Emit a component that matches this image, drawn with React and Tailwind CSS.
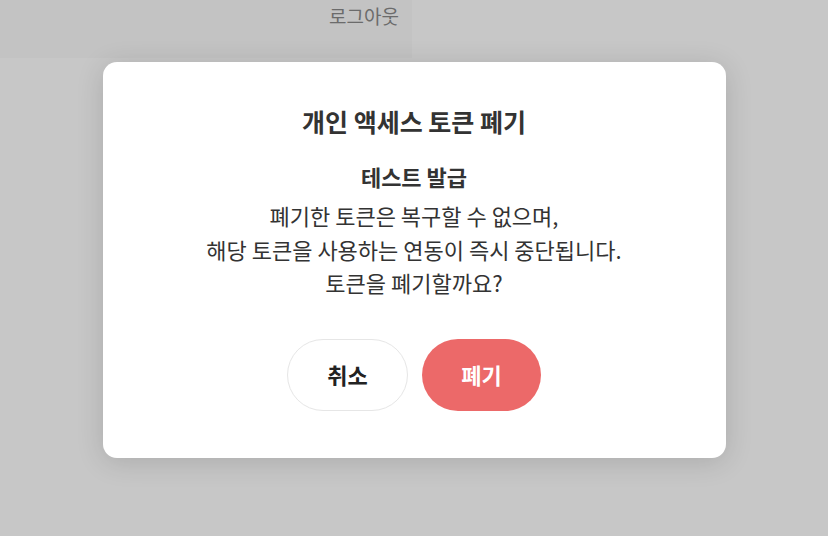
import React from "react";

const font = { fontFamily: '"Noto Sans CJK KR", "Noto Sans", sans-serif' };

function RevokeTokenModal({ tokenName, onCancel, onConfirm }) {
  return (
    <div className="w-[623px] rounded-[14px] bg-white px-8 pt-[43px] pb-[47px] shadow-[0_4px_28px_rgba(0,0,0,0.14)] flex flex-col items-center">
      <h2 className="text-[25px] leading-[32px] font-bold text-[#333]">개인 액세스 토큰 폐기</h2>
      <h3 className="mt-[24px] text-[22px] leading-[30px] font-bold text-[#333]">{tokenName}</h3>
      <p className="mt-[8px] text-center text-[22px] leading-[33.5px] text-[#333]">
        폐기한 토큰은 복구할 수 없으며,
        <br />
        해당 토큰을 사용하는 연동이 즉시 중단됩니다.
        <br />
        토큰을 폐기할까요?
      </p>
      <div className="mt-[39px] flex gap-[14px]">
        <button
          onClick={onCancel}
          className="w-[121px] h-[72px] rounded-full border border-[#e6e6e6] bg-white text-[22px] font-bold text-[#222]"
        >
          취소
        </button>
        <button
          onClick={onConfirm}
          className="w-[119px] h-[72px] rounded-full bg-[#ec6969] text-[22px] font-bold text-white"
        >
          폐기
        </button>
      </div>
    </div>
  );
}

export default function App() {
  return (
    <div className="relative w-[828px] h-[536px] overflow-hidden bg-white" style={font}>
      <div className="w-[412px] h-[58px] bg-[#fafafa] flex items-start justify-end pr-[13px] pt-[2px]">
        <span className="text-[19px] leading-[28px] text-[#8a8a8a]">로그아웃</span>
      </div>

      <div className="absolute inset-0 bg-black/[0.22] flex justify-center pt-[62px]">
        <div className="h-fit">
          <RevokeTokenModal tokenName="테스트 발급" />
        </div>
      </div>
    </div>
  );
}
